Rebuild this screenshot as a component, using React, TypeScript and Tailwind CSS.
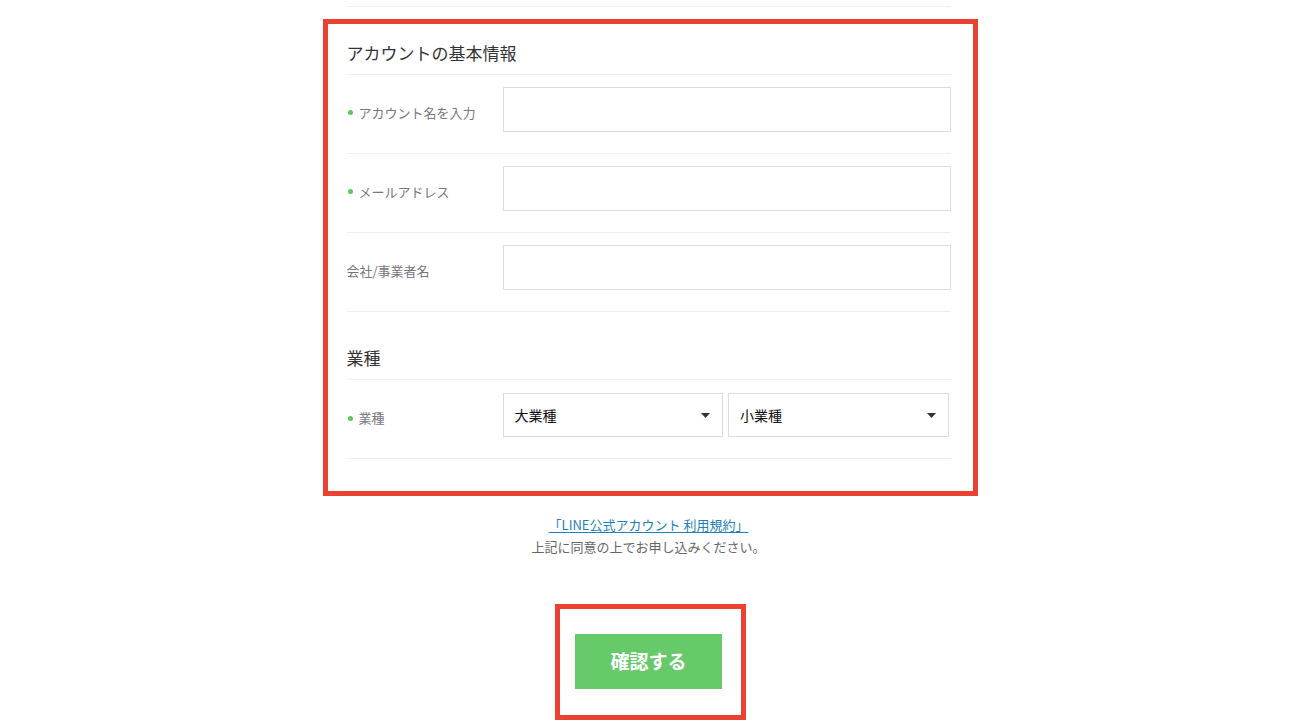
import type { ReactNode } from "react";

const font = {
  fontFamily: '"Noto Sans CJK JP", "Noto Sans", sans-serif',
};

function Caret() {
  return (
    <svg width="9" height="5" viewBox="0 0 9 5" className="shrink-0">
      <path d="M0 0 L9 0 L4.5 5 Z" fill="#333" />
    </svg>
  );
}

function Row({
  label,
  required,
  children,
  h = 45,
}: {
  label: string;
  required?: boolean;
  children: ReactNode;
  h?: number;
}) {
  return (
    <div className="flex items-center border-b border-[#eeeeee] pb-[21px] pt-[12px]">
      <div className="mt-[6px] flex w-[156px] shrink-0 items-center text-[13px] text-[#76767c]">
        {required ? (
          <span className="mr-[6px] ml-[1px] inline-block h-[5px] w-[5px] rounded-full bg-[#5bc85f]" />
        ) : null}
        <span>{label}</span>
      </div>
      <div className="flex flex-1 gap-[5px]" style={{ height: h }}>
        {children}
      </div>
    </div>
  );
}

function TextBox() {
  return (
    <input
      type="text"
      className="h-full w-full border border-[#dcdcdc] bg-white px-3 text-[14px] outline-none"
    />
  );
}

function SelectBox({ text }: { text: string }) {
  return (
    <div className="flex h-full flex-1 items-center justify-between border border-[#dcdcdc] bg-white pl-[11px] pr-[12px] text-[14px] text-[#111]">
      <span>{text}</span>
      <Caret />
    </div>
  );
}

export default function App() {
  return (
    <div className="min-h-[727px] w-full bg-white" style={font}>
      <div className="mx-auto w-[604px]">
        {/* previous section edge */}
        <div className="h-[7px] border-b border-[#eeeeee]" />

        {/* account info block */}
        <div className="mt-[12px] -mr-[27px] -ml-[24px] border-[5px] border-[#ea4133] pr-[22px] pb-[32px] pl-[19px]">
          <h2 className="border-b border-[#eeeeee] pt-[17px] pb-[9px] text-[17px] leading-[24px] font-normal text-[#333]">
            アカウントの基本情報
          </h2>
          <Row label="アカウント名を入力" required>
            <TextBox />
          </Row>
          <Row label="メールアドレス" required>
            <TextBox />
          </Row>
          <Row label="会社/事業者名">
            <TextBox />
          </Row>

          <h2 className="border-b border-[#eeeeee] pt-[34px] pb-[9px] text-[17px] leading-[24px] font-normal text-[#333]">
            業種
          </h2>
          <div className="flex items-center border-b border-[#eeeeee] pt-[13px] pb-[21px]">
            <div className="mt-[6px] flex w-[156px] shrink-0 items-center text-[13px] text-[#76767c]">
              <span className="mr-[6px] ml-[1px] inline-block h-[5px] w-[5px] rounded-full bg-[#5bc85f]" />
              <span>業種</span>
            </div>
            <div className="flex h-[44px] w-[446px] gap-[5px]">
              <SelectBox text="大業種" />
              <SelectBox text="小業種" />
            </div>
          </div>
        </div>

        {/* terms */}
        <div className="mt-[18px] text-center text-[13px] leading-[22px]">
          <a href="#" className="text-[#1f7fb8] underline underline-offset-2">
            「LINE公式アカウント 利用規約」
          </a>
          <p className="text-[#666]">上記に同意の上でお申し込みください。</p>
        </div>

        {/* submit */}
        <div className="mt-[46px] flex justify-center">
          <div className="ml-[4px] border-[5px] border-[#ea4133] pt-[25px] pr-[19px] pb-[26px] pl-[15px]">
            <button
              type="button"
              className="flex h-[55px] w-[147px] items-center justify-center bg-[#66ca6b] text-[19px] font-bold text-white"
            >
              確認する
            </button>
          </div>
        </div>
      </div>
    </div>
  );
}
